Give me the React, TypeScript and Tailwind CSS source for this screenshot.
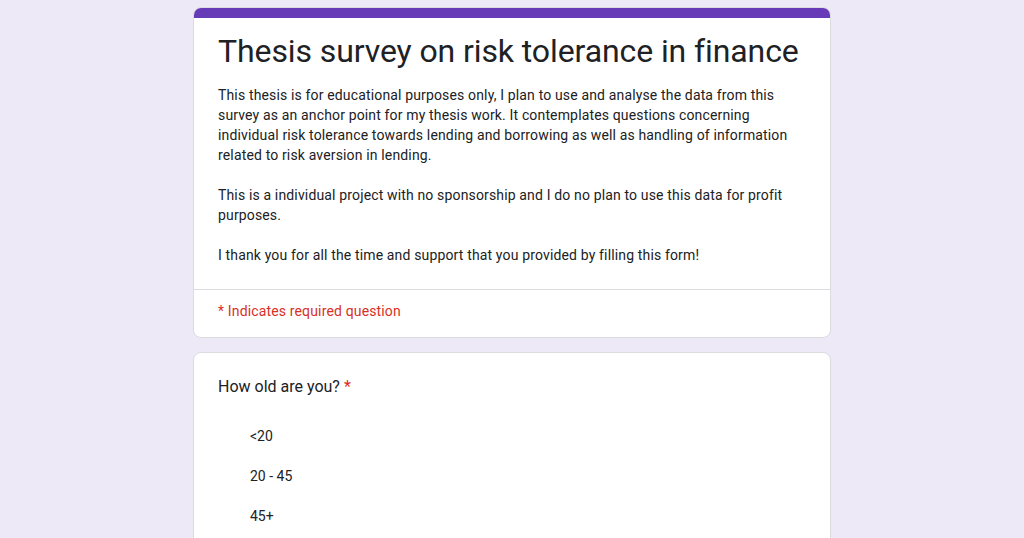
export default function App() {
  const options = ['<20', '20 - 45', '45+'];
  return (
    <div
      className="min-h-screen w-full bg-[#ede9f6] pt-[7px] text-[#202124]"
      style={{ fontFamily: 'Roboto, "Noto Sans", Arial, sans-serif' }}
    >
      <div className="mx-auto flex w-[638px] flex-col gap-[14px]">
        <div className="overflow-hidden rounded-lg border border-[#dadce0] bg-white">
          <div className="h-[10px] bg-[#673ab7]" />
          <div className="px-[24px] pt-[13px] pb-[24px]">
            <h1 className="text-[32px] leading-[40px] tracking-[-0.1px] text-[#202124]">
              Thesis survey on risk tolerance in finance
            </h1>
            <div className="mt-[14px] text-[14px] leading-[20px] tracking-[0.15px] text-[#202124]">
              <p>
                This thesis is for educational purposes only, I plan to use and analyse the data from this
                <br />
                survey as an anchor point for my thesis work. It contemplates questions concerning
                <br />
                individual risk tolerance towards lending and borrowing as well as handling of information
                <br />
                related to risk aversion in lending.
              </p>
              <p className="mt-[20px]">
                This is a individual project with no sponsorship and I do no plan to use this data for profit
                <br />
                purposes.
              </p>
              <p className="mt-[20px]">
                I thank you for all the time and support that you provided by filling this form!
              </p>
            </div>
          </div>
          <div className="border-t border-[#dadce0] px-[24px] pt-[11px] pb-[16px] text-[14px] leading-[20px] tracking-[0.15px] text-[#d93025]">
            * Indicates required question
          </div>
        </div>

        <div className="rounded-lg border border-[#dadce0] bg-white px-[24px] pt-[22px] pb-[24px]">
          <div className="text-[16px] leading-[24px] text-[#202124]">
            How old are you? <span className="text-[#d93025]">*</span>
          </div>
          <div className="mt-[17px] flex flex-col pl-[32px]">
            {options.map((o) => (
              <div key={o} className="py-[10px] text-[14px] leading-[20px] text-[#202124]">
                {o}
              </div>
            ))}
          </div>
        </div>
      </div>
    </div>
  );
}
